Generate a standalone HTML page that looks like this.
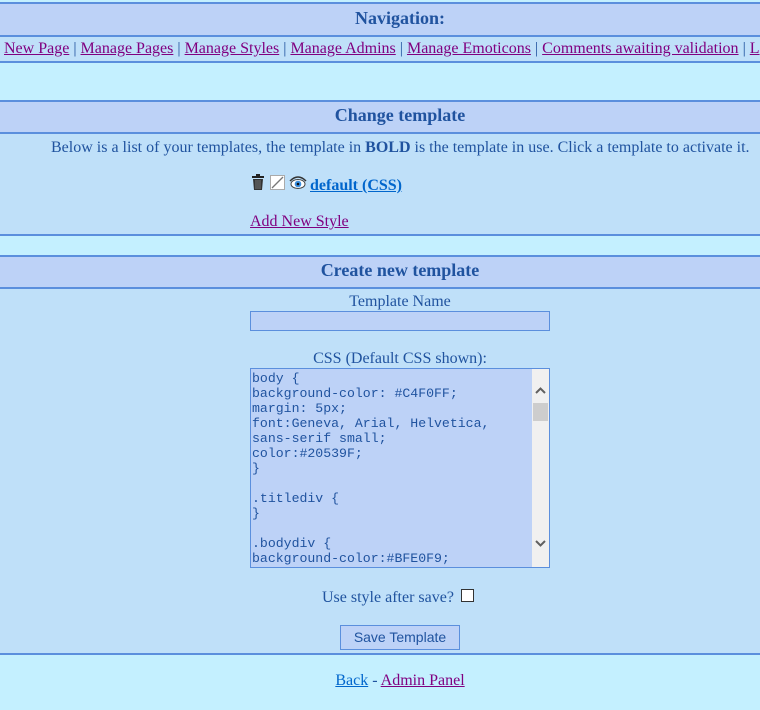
<!DOCTYPE html>
<html><head><style>
*{margin:0;padding:0;box-sizing:border-box}
body{width:760px;height:710px;background:#C4F0FF;font-family:"Liberation Serif",serif;font-size:16px;color:#20539F;position:relative;overflow:hidden}
.a{position:absolute;left:0;width:760px}
.c{position:absolute;left:0;width:800px;text-align:center;white-space:nowrap}
.ln{height:2px;background:#5B8FDD}
.tb{background:#BDD2F7}
.tt{font-weight:bold;font-size:18px}
.bd{background:#BFE0F9}
a{color:#800080;text-decoration:underline}
.t{position:absolute;white-space:nowrap}
</style></head><body>
<div class="a ln" style="top:2px"></div>
<div class="a tb" style="top:4px;height:31px"></div>
<div class="c tt" style="top:8px">Navigation:</div>
<div class="a ln" style="top:35px"></div>
<div class="a bd" style="top:37px;height:24px"></div>
<div class="t" style="left:4px;top:40px"><a>New Page</a> | <a>Manage Pages</a> | <a>Manage Styles</a> | <a>Manage Admins</a> | <a>Manage Emoticons</a> | <a>Comments awaiting validation</a> | <a>L</a></div>
<div class="a ln" style="top:61px"></div>

<div class="a ln" style="top:100px"></div>
<div class="a tb" style="top:102px;height:30px"></div>
<div class="c tt" style="top:105px">Change template</div>
<div class="a ln" style="top:132px"></div>
<div class="a bd" style="top:134px;height:100px"></div>
<div class="t" style="left:51px;top:139px">Below is a list of your templates, the template in <b>BOLD</b> is the template in use. Click a template to activate it.</div>
<svg class="t" style="left:250px;top:173px" width="58" height="20" viewBox="0 0 58 20">
<rect x="2" y="3" width="12" height="2" fill="#222"/><rect x="6" y="1" width="4" height="2" fill="#222"/>
<path d="M3 6h10l-1 11H4z" fill="#333"/><path d="M6 7v9M8 7v9M10 7v9" stroke="#888" stroke-width="0.8"/>
<rect x="20.5" y="2.5" width="14" height="14" fill="#fff" stroke="#aaa"/><path d="M22 15L33 4" stroke="#777" stroke-width="1.3"/>
<path d="M40 8q8-8 16 0" stroke="#333" fill="none" stroke-width="1.5"/><ellipse cx="48" cy="11" rx="7" ry="4.5" fill="#fff" stroke="#444"/><circle cx="48" cy="11" r="3.3" fill="#3a8fe0"/><circle cx="48" cy="11" r="1.3" fill="#111"/>
</svg>
<div class="t" style="left:310px;top:177px;font-weight:bold"><a style="color:#0066CC">default (CSS)</a></div>
<div class="t" style="left:250px;top:213px"><a>Add New Style</a></div>
<div class="a ln" style="top:234px"></div>

<div class="a ln" style="top:255px"></div>
<div class="a tb" style="top:257px;height:30px"></div>
<div class="c tt" style="top:260px">Create new template</div>
<div class="a ln" style="top:287px"></div>
<div class="a bd" style="top:289px;height:364px"></div>
<div class="c" style="top:293px">Template Name</div>
<div class="t" style="left:250px;top:311px;width:300px;height:20px;background:#BDD2F7;border:1px solid #5B8FDD"></div>
<div class="c" style="top:350px">CSS (Default CSS shown):</div>
<div class="t" style="left:250px;top:368px;width:300px;height:200px;background:#BDD2F7;border:1px solid #5B8FDD;overflow:hidden">
<pre style="font-family:'Liberation Mono',monospace;font-size:13.2px;line-height:15px;color:#20539F;padding:2px 0 0 1px">body {
background-color: #C4F0FF;
margin: 5px;
font:Geneva, Arial, Helvetica,
sans-serif small;
color:#20539F;
}

.titlediv {
}

.bodydiv {
background-color:#BFE0F9;</pre>
<div style="position:absolute;right:0;top:0;width:17px;height:198px;background:#F0F0F0"></div>
<div style="position:absolute;right:1px;top:34px;width:15px;height:18px;background:#CDCDCD"></div>
<svg style="position:absolute;right:3px;top:171px" width="11" height="8"><path d="M1 1l4.5 4.5L10 1" stroke="#606060" stroke-width="2" fill="none"/></svg>
<svg style="position:absolute;right:3px;top:17px" width="11" height="8"><path d="M1 7l4.5-4.5L10 7" stroke="#606060" stroke-width="2" fill="none"/></svg>
</div>
<div class="t" style="left:322px;top:589px">Use style after save?</div>
<div class="t" style="left:461px;top:589px;width:13px;height:13px;background:#fff;border:1px solid #333"></div>
<div class="t" style="left:340px;top:625px;width:120px;height:25px;background:#BDD2F7;border:1px solid #5B8FDD;font:14px 'Liberation Sans',sans-serif;text-align:center;line-height:23px">Save Template</div>
<div class="a ln" style="top:653px"></div>
<div class="c" style="top:672px"><a style="color:#0066CC">Back</a> - <a>Admin Panel</a></div>
</body></html>
